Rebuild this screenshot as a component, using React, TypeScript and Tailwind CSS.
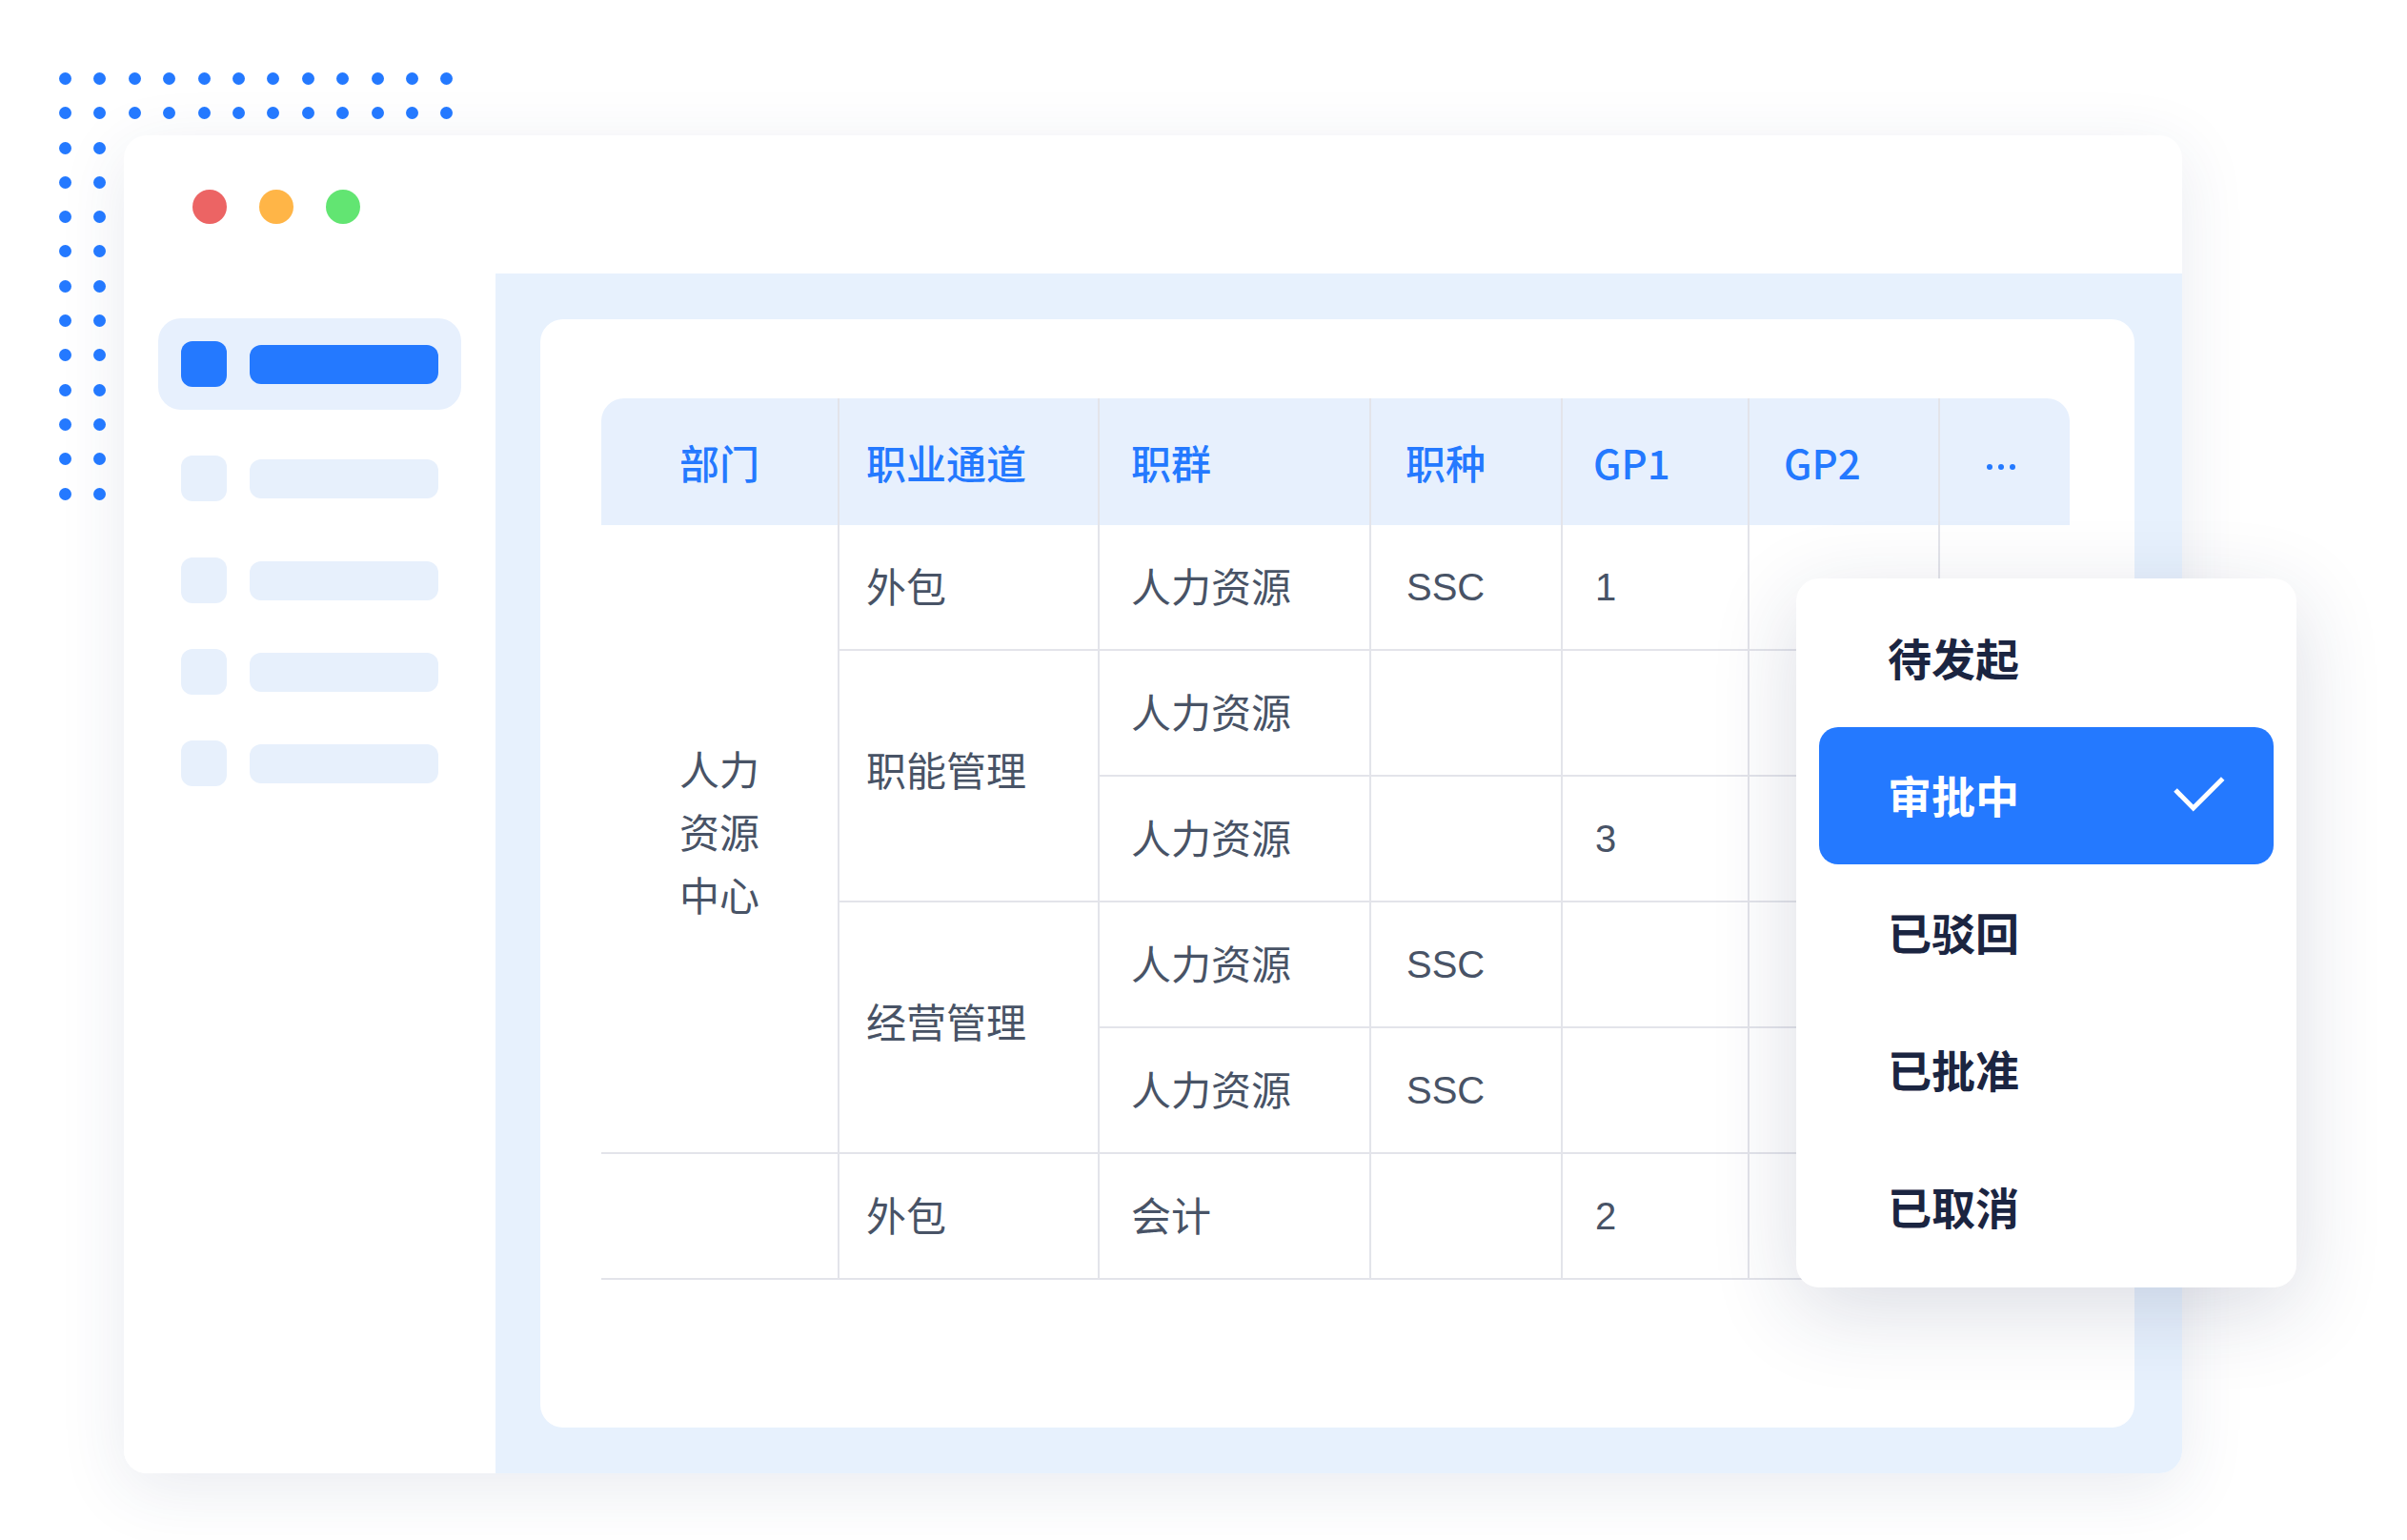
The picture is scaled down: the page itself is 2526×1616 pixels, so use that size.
import React from 'react';

const BLUE = 'bg-[#2479FF]';

// decorative dot pattern, top-left of the page
const DotPattern: React.FC = () => {
  const rows = 13;
  const cols = 12;
  return (
    <div className="absolute left-[62px] top-[76px] z-20 grid grid-cols-[repeat(12,13px)] gap-x-[23.4px] gap-y-[23.3px]">
      {Array.from({ length: rows * cols }).map((_, i) => {
        const r = Math.floor(i / cols);
        const c = i % cols;
        const on = r < 2 || c < 2;
        return (
          <span
            key={i}
            className={`h-[13px] w-[13px] rounded-full ${on ? BLUE : 'bg-transparent'}`}
          />
        );
      })}
    </div>
  );
};

const SideItem: React.FC<{ active?: boolean; className?: string }> = ({ active, className = '' }) => (
  <div
    className={`flex w-[318px] items-center gap-[24px] px-[24px] ${
      active ? 'h-[96px] rounded-[24px] bg-[#E7F0FD]' : 'h-[48px]'
    } ${className}`}
  >
    <span className={`h-[48px] w-[48px] shrink-0 rounded-[12px] ${active ? BLUE : 'bg-[#E7F0FC]'}`} />
    <span className={`h-[41px] w-[198px] rounded-[12px] ${active ? BLUE : 'bg-[#E7F0FC]'}`} />
  </div>
);

const Sidebar: React.FC = () => (
  <aside className="flex w-[390px] shrink-0 flex-col bg-white pl-[36px] pt-[47px]">
    <SideItem active />
    <SideItem className="mt-[48px]" />
    <SideItem className="mt-[59px]" />
    <SideItem className="mt-[48px]" />
    <SideItem className="mt-[48px]" />
  </aside>
);

const line = 'border-[#E3E4EA]';
const th = `p-0 align-middle font-medium text-[42px] text-[#2479FF] bg-[#E7F0FD] border-r-2 ${line}`;
const td = `p-0 pb-[6px] align-middle font-normal text-[42px] text-[#485366] border-r-2 border-b-2 ${line}`;
const tdSpan = `p-0 pb-[16px] align-middle font-normal text-[42px] text-[#485366] border-r-2 border-b-2 ${line}`;
const tdLast = `p-0 border-b-2 ${line}`;

// latin labels (SSC, digits) read closer to a Helvetica-like face
const Latin: React.FC<{ children: React.ReactNode }> = ({ children }) => (
  <span className="font-['Liberation_Sans',sans-serif] text-[40px]">{children}</span>
);

const MoreDots: React.FC = () => (
  <div className="flex items-center justify-center gap-[6px] pr-[8px] pt-[10px]">
    <span className="h-[6px] w-[6px] rounded-full bg-[#2479FF]" />
    <span className="h-[6px] w-[6px] rounded-full bg-[#2479FF]" />
    <span className="h-[6px] w-[6px] rounded-full bg-[#2479FF]" />
  </div>
);

const JobTable: React.FC = () => (
  <table className="w-[1541px] table-fixed border-separate border-spacing-0 text-left">
    <colgroup>
      <col className="w-[250px]" />
      <col className="w-[273px]" />
      <col className="w-[285px]" />
      <col className="w-[201px]" />
      <col className="w-[196px]" />
      <col className="w-[200px]" />
      <col className="w-[136px]" />
    </colgroup>
    <thead>
      <tr className="h-[133px]">
        <th className={`${th} rounded-tl-[24px] text-center`}>部门</th>
        <th className={`${th} text-left pl-[28px]`}>职业通道</th>
        <th className={`${th} text-left pl-[33px]`}>职群</th>
        <th className={`${th} text-left pl-[36px]`}>职种</th>
        <th className={`${th} text-left pl-[32px]`}>GP1</th>
        <th className={`${th} text-left pl-[36px]`}>GP2</th>
        <th className="rounded-tr-[24px] bg-[#E7F0FD] p-0">
          <MoreDots />
        </th>
      </tr>
    </thead>
    <tbody>
      <tr className="h-[132px]">
        <td rowSpan={5} className={`${tdSpan} pb-[10px] text-center leading-[66px]`}>
          <div>人力</div>
          <div>资源</div>
          <div>中心</div>
        </td>
        <td className={`${td} pl-[28px]`}>外包</td>
        <td className={`${td} pl-[33px]`}>人力资源</td>
        <td className={`${td} pl-[37px]`}><Latin>SSC</Latin></td>
        <td className={`${td} pl-[34px]`}><Latin>1</Latin></td>
        <td className={td} />
        <td className={tdLast} />
      </tr>
      <tr className="h-[132px]">
        <td rowSpan={2} className={`${tdSpan} pl-[28px]`}>职能管理</td>
        <td className={`${td} pl-[33px]`}>人力资源</td>
        <td className={td} />
        <td className={td} />
        <td className={td} />
        <td className={tdLast} />
      </tr>
      <tr className="h-[132px]">
        <td className={`${td} pl-[33px]`}>人力资源</td>
        <td className={td} />
        <td className={`${td} pl-[34px]`}><Latin>3</Latin></td>
        <td className={td} />
        <td className={tdLast} />
      </tr>
      <tr className="h-[132px]">
        <td rowSpan={2} className={`${tdSpan} pl-[28px]`}>经营管理</td>
        <td className={`${td} pl-[33px]`}>人力资源</td>
        <td className={`${td} pl-[37px]`}><Latin>SSC</Latin></td>
        <td className={td} />
        <td className={td} />
        <td className={tdLast} />
      </tr>
      <tr className="h-[132px]">
        <td className={`${td} pl-[33px]`}>人力资源</td>
        <td className={`${td} pl-[37px]`}><Latin>SSC</Latin></td>
        <td className={td} />
        <td className={td} />
        <td className={tdLast} />
      </tr>
      <tr className="h-[132px]">
        <td className={td} />
        <td className={`${td} pl-[28px]`}>外包</td>
        <td className={`${td} pl-[33px]`}>会计</td>
        <td className={td} />
        <td className={`${td} pl-[34px]`}><Latin>2</Latin></td>
        <td className={td} />
        <td className={tdLast} />
      </tr>
    </tbody>
  </table>
);

const statuses = ['待发起', '审批中', '已驳回', '已批准', '已取消'];

const StatusMenu: React.FC<{ selected: string }> = ({ selected }) => (
  <div className="absolute left-[1885px] top-[607px] z-30 w-[525px] rounded-[24px] bg-white px-[24px] py-[12px] shadow-[0_24px_90px_rgba(30,45,90,0.16)]">
    {statuses.map((s) => {
      const on = s === selected;
      return (
        <div
          key={s}
          className={`flex h-[144px] items-center justify-between pb-[4px] pl-[72px] pr-[50px] text-[46px] font-semibold ${
            on ? 'rounded-[20px] bg-[#2479FF] text-white' : 'text-[#1B2541]'
          }`}
        >
          <span>{s}</span>
          {on && (
            <svg width="56" height="40" viewBox="0 0 56 40" fill="none">
              <path d="M3 16 L21.7 35 L52.7 4" stroke="white" strokeWidth="5" />
            </svg>
          )}
        </div>
      );
    })}
  </div>
);

export default function App() {
  return (
    <div className="relative h-[1616px] w-[2526px] overflow-hidden bg-white pl-[130px] pt-[142px] font-['Noto_Sans_CJK_SC','Noto_Sans',sans-serif]">
      <DotPattern />

      <div className="relative z-10 flex h-[1404px] w-[2160px] flex-col overflow-hidden rounded-[24px] bg-white shadow-[0_16px_70px_rgba(37,56,107,0.10)]">
        {/* window title bar */}
        <div className="flex h-[145px] shrink-0 items-start gap-[34px] pl-[72px] pt-[57px]">
          <span className="h-[36px] w-[36px] rounded-full bg-[#EC6464]" />
          <span className="h-[36px] w-[36px] rounded-full bg-[#FFB547]" />
          <span className="h-[36px] w-[36px] rounded-full bg-[#62E572]" />
        </div>

        <div className="flex flex-1">
          <Sidebar />
          <main className="flex-1 bg-[#E7F1FD] pb-[48px] pl-[47px] pr-[50px] pt-[48px]">
            <div className="h-full rounded-[24px] bg-white pl-[64px] pt-[83px]">
              <JobTable />
            </div>
          </main>
        </div>
      </div>

      <StatusMenu selected="审批中" />
    </div>
  );
}
